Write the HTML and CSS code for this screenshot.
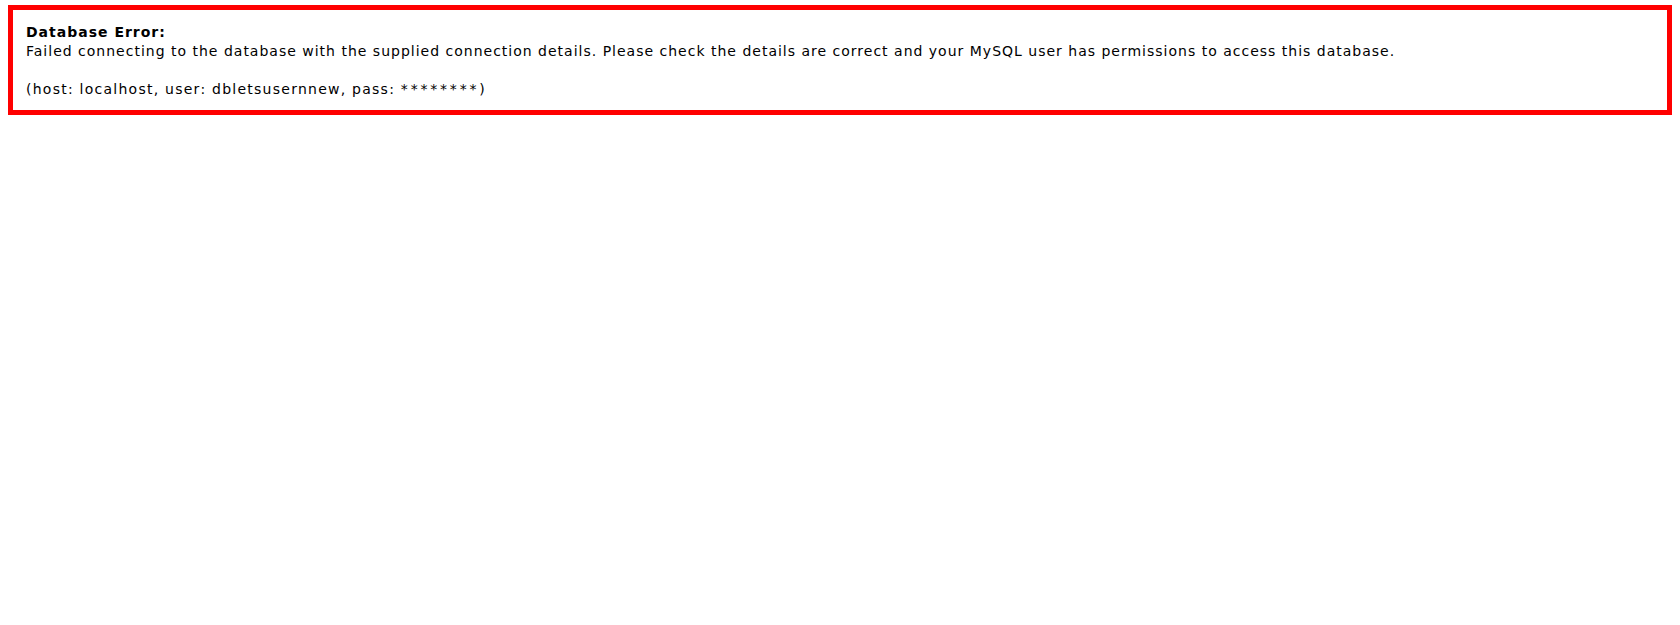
FILE: index.html
```html
<!DOCTYPE html>
<html>
<head>
<meta charset="utf-8">
<title>Database Error</title>
<link rel="stylesheet" href="styles.css">
</head>
<body>
<div class="error-box">
<b class="title">Database Error:</b><br>
Failed connecting to the database with the supplied connection details. Please check the details are correct and your MySQL user has permissions to access this database.<br><br>
<span class="details">(host: localhost, user: dbletsusernnew, pass: <span class="mask">********</span>)</span>
</div>
</body>
</html>
```
FILE: styles.css
```css
html, body {
  background: #fff;
}
body {
  margin: 5px 8px;
  font-family: "DejaVu Sans", Verdana, sans-serif;
  font-size: 14px;
  line-height: 19px;
  letter-spacing: 1px;
  color: #000;
}
.error-box {
  border: 5px solid #ff0000;
  padding: 13px 13px 11px 13px;
}
.title {
  font-weight: bold;
}
.details {
  letter-spacing: 1.25px;
}
.mask {
  letter-spacing: 2.8px;
}
```
